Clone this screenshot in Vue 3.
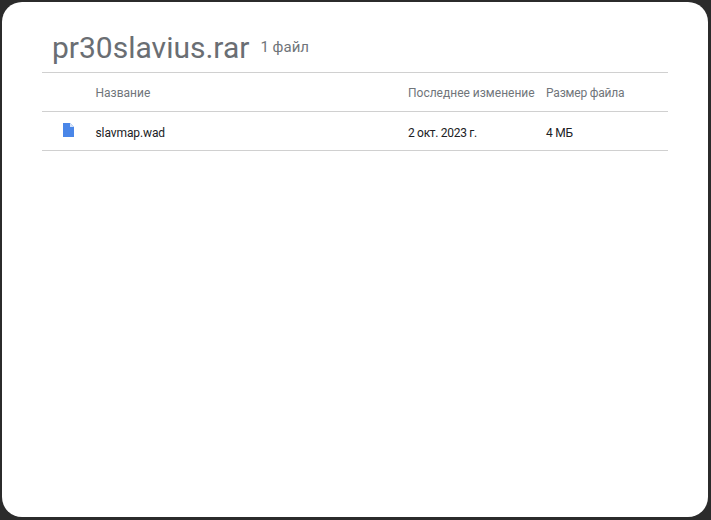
<script setup>
const columns = { name: 'Название', modified: 'Последнее изменение', size: 'Размер файла' }
const row = { name: 'slavmap.wad', modified: '2 окт. 2023 г.', size: '4 МБ' }
</script>

<template>
  <div class="page">
    <div class="card">
      <header class="head">
        <h1 class="title">pr30slavius.rar</h1>
        <span class="count">1 файл</span>
      </header>
      <div class="row labels">
        <span class="c-icon"></span>
        <span class="c-name">{{ columns.name }}</span>
        <span class="c-mod">{{ columns.modified }}</span>
        <span class="c-size">{{ columns.size }}</span>
      </div>
      <div class="row item">
        <span class="c-icon">
          <svg width="11" height="14" viewBox="0 0 11 14">
            <path d="M0 0H7L11 4V14H0Z" fill="#4a86e8" />
            <path d="M7 0L11 4H7Z" fill="#d5e3fa" />
          </svg>
        </span>
        <span class="c-name">{{ row.name }}</span>
        <span class="c-mod">{{ row.modified }}</span>
        <span class="c-size">{{ row.size }}</span>
      </div>
    </div>
  </div>
</template>

<style>
html, body { margin: 0; background: #2b2b2b; }
</style>

<style scoped>
.page {
  width: 711px;
  height: 520px;
  box-sizing: border-box;
  padding: 2px 3px 3px 2px;
  background: #2b2b2b;
  font-family: Roboto, "Noto Sans", sans-serif;
}
.card {
  height: 100%;
  box-sizing: border-box;
  padding: 0 40px;
  background: #fff;
  border-radius: 20px;
}
.head {
  height: 71px;
  box-sizing: border-box;
  padding: 27px 0 0 10px;
  display: flex;
  align-items: flex-start;
  gap: 11px;
  border-bottom: 1px solid #d0d0d0;
}
.title {
  margin: 0;
  font-size: 30px;
  line-height: 38px;
  font-weight: 400;
  color: #6a6e73;
}
.count {
  font-size: 15px;
  line-height: 36px;
  color: #70757a;
}
.row {
  height: 39px;
  box-sizing: border-box;
  padding-top: 2px;
  display: flex;
  align-items: center;
  border-bottom: 1px solid #d0d0d0;
  font-size: 12px;
}
.labels { color: #70757a; }
.item { color: #202124; padding-top: 3px; }
.c-icon {
  width: 54px;
  padding-left: 21px;
  box-sizing: border-box;
  display: flex;
  margin-top: -6px;
}
.c-name { width: 312px; margin-left: -0.5px; margin-right: 0.5px; }
.c-mod { width: 138px; }
.c-size { flex: 1; letter-spacing: -0.2px; }
.item .c-name { letter-spacing: -0.1px; }
.item .c-mod { letter-spacing: -0.3px; }
</style>
